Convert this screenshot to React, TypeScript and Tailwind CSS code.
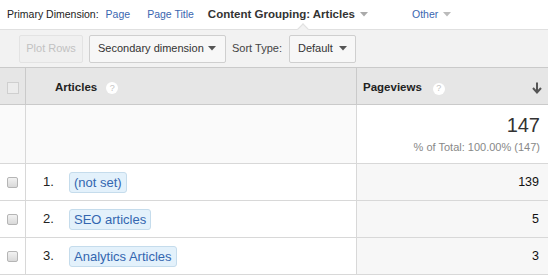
import React from 'react';

const rows = [
  { n: 1, label: '(not set)', views: 139 },
  { n: 2, label: 'SEO articles', views: 5 },
  { n: 3, label: 'Analytics Articles', views: 3 },
];

const Caret = ({ className = '' }: { className?: string }) => (
  <svg width="8" height="5" viewBox="0 0 8 5" className={className}>
    <path d="M0 0 L8 0 L4 4.5 Z" fill="currentColor" />
  </svg>
);

const Help = () => (
  <span className="inline-flex h-[12px] w-[12px] items-center justify-center rounded-full bg-white text-[9px] font-normal leading-none text-[#c4c4c4]">
    ?
  </span>
);

export default function App() {
  return (
    <div className="w-[548px] h-[277px] overflow-hidden bg-white font-['Liberation_Sans',Arial,sans-serif] text-[#222]">
      {/* primary dimension bar */}
      <div className="flex h-[29px] items-center pl-[7px] text-[10.5px]">
        <span className="text-[#222]">Primary Dimension:</span>
        <span className="ml-[7px] text-[#3a66b0]">Page</span>
        <span className="ml-[17px] text-[#3a66b0]">Page Title</span>
        <span className="ml-[14px] flex items-center font-bold text-[11.5px] text-[#333]">
          Content Grouping: Articles
          <Caret className="ml-[5px] text-[#aaa]" />
        </span>
        <span className="ml-[44px] flex items-center text-[#3a66b0]">
          Other
          <Caret className="ml-[5px] text-[#bbb]" />
        </span>
      </div>

      {/* toolbar */}
      <div className="relative flex h-[38px] items-center border-t border-[#e0e0e0] bg-[#f2f2f2] pl-[19px] text-[11px]">
        <div className="absolute left-[299px] top-[-5px] h-[8px] w-[8px] rotate-45 border-l border-t border-[#e0e0e0] bg-[#f2f2f2]" />
        <div className="flex h-[28px] w-[64px] items-center justify-center rounded-[2px] border border-[#e3e3e3] bg-[#f0f0f0] text-[#c2c2c2]">
          Plot Rows
        </div>
        <div className="ml-[6px] flex h-[28px] w-[137px] items-center justify-between rounded-[2px] border border-[#cfcfcf] bg-[#f7f7f7] pl-[8px] pr-[9px] text-[#333]">
          Secondary dimension
          <Caret className="text-[#555]" />
        </div>
        <span className="ml-[6px] text-[#444]">Sort Type:</span>
        <div className="ml-[7px] flex h-[28px] w-[67px] items-center justify-between rounded-[2px] border border-[#cfcfcf] bg-[#f7f7f7] pl-[8px] pr-[8px] text-[#333]">
          Default
          <Caret className="text-[#555]" />
        </div>
      </div>

      {/* table */}
      <div className="grid grid-cols-[25px_331px_1fr] border-t border-[#cacaca]">
        {/* header */}
        <div className="flex h-[37px] items-center justify-center border-b border-[#cacaca] bg-[#e6e6e6] pt-[4px]">
          <div className="h-[12px] w-[12px] border border-[#cfcfcf] bg-[#ececec]" />
        </div>
        <div className="flex h-[37px] items-center gap-[9px] border-b border-l border-[#cacaca] bg-[#e6e6e6] pl-[29px] pt-[4px] text-[11.5px] font-bold text-[#222]">
          Articles
          <Help />
        </div>
        <div className="flex h-[37px] items-center border-b border-l border-[#cacaca] bg-[#e6e6e6] pl-[6px] pr-[6px] pt-[4px] text-[11.5px] font-bold text-[#222]">
          Pageviews
          <span className="ml-[11px]">
            <Help />
          </span>
          <svg width="10" height="12" viewBox="0 0 10 12" className="ml-auto">
            <path d="M5 0.5 V10" stroke="#555" strokeWidth="2" />
            <path d="M1 6 L5 10.5 L9 6" stroke="#555" strokeWidth="2" fill="none" />
          </svg>
        </div>

        {/* summary */}
        <div className="h-[59px] border-b border-[#d8d8d8] bg-[#fafafa]" />
        <div className="h-[59px] border-b border-l border-[#d8d8d8] bg-[#fafafa]" />
        <div className="flex h-[59px] flex-col items-end justify-end border-b border-l border-[#d8d8d8] bg-white pb-[9px] pr-[8px]">
          <span className="text-[20px] leading-[22px] text-[#333]">147</span>
          <span className="mt-[5px] text-[11px] leading-[13px] text-[#888]">% of Total: 100.00% (147)</span>
        </div>

        {/* rows */}
        {rows.map((r) => (
          <React.Fragment key={r.n}>
            <div className="flex h-[37px] items-center justify-center border-b border-[#d8d8d8] bg-white">
              <div className="h-[11px] w-[11px] rounded-[2px] border border-[#b5b5b5] bg-gradient-to-b from-[#f2f2f2] to-[#d9d9d9]" />
            </div>
            <div className="flex h-[37px] items-center border-b border-l border-[#d8d8d8] bg-white pl-[17px] text-[13px]">
              <span className="w-[26px] text-[#222]">{r.n}.</span>
              <span className="rounded-[3px] border border-[#c5dcec] bg-[#e3f1fb] px-[4px] leading-[19px] text-[#3366b0]">
                {r.label}
              </span>
            </div>
            <div className="flex h-[37px] items-center justify-end border-b border-l border-[#d8d8d8] bg-[#f7f7f7] pr-[9px] text-[12.5px] text-[#111]">
              {r.views}
            </div>
          </React.Fragment>
        ))}
      </div>
    </div>
  );
}
